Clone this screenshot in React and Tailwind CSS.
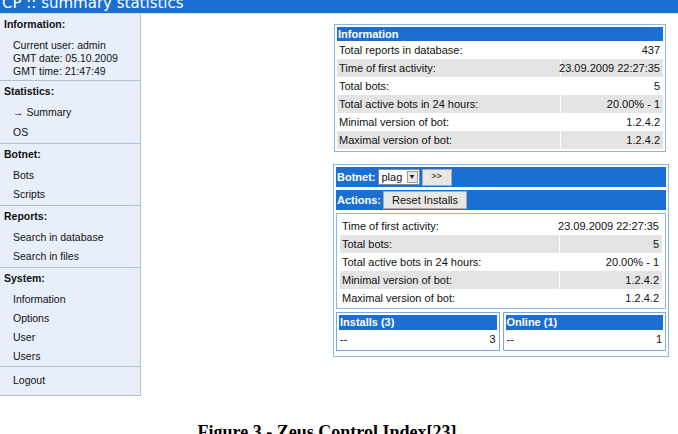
const font = { fontFamily: '"Liberation Sans", Arial, sans-serif' };

const menu = [
  { title: "Information:", plain: ["Current user: admin", "GMT date: 05.10.2009", "GMT time: 21:47:49"] },
  { title: "Statistics:", items: ["→ Summary", "OS"], h: "h-[20px]" },
  { title: "Botnet:", items: ["Bots", "Scripts"], h: "h-[19.5px]" },
  { title: "Reports:", items: ["Search in database", "Search in files"], h: "h-[19.5px]" },
  { title: "System:", items: ["Information", "Options", "User", "Users"], h: "h-[19px]" },
];

const infoRows = [
  ["Total reports in database:", "437"],
  ["Time of first activity:", "23.09.2009 22:27:35"],
  ["Total bots:", "5"],
  ["Total active bots in 24 hours:", "20.00% - 1"],
  ["Minimal version of bot:", "1.2.4.2"],
  ["Maximal version of bot:", "1.2.4.2"],
];

function Row({ label, value, gray, h }) {
  return (
    <div className={`flex ${h} ${gray ? "bg-[#e4e4e4]" : "bg-white"}`}>
      <div className="flex-1 pl-[2px] flex items-center border-r border-white whitespace-nowrap">{label}</div>
      <div className="w-[102px] pr-[3px] flex items-center justify-end whitespace-nowrap">{value}</div>
    </div>
  );
}

function MiniBox({ title, value }) {
  return (
    <div className="flex-1 border border-[#7fa9dc] p-[2px] bg-white">
      <div className="h-[15px] bg-[#1b6fd2] text-white font-bold px-[1px] flex items-center">{title}</div>
      <div className="flex h-[18px] items-center">
        <div className="flex-1 pl-[1px]">--</div>
        <div className="w-[70px] text-right pr-[1px]">{value}</div>
      </div>
    </div>
  );
}

export default function App() {
  return (
    <div className="w-[678px] h-[434px] bg-white overflow-hidden relative text-[11px] text-[#111]" style={font}>
      <div className="h-[14px] bg-[#1b6fd2] overflow-hidden border-b border-[#cfe0f5]">
        <div className="text-white text-[15px] leading-[16px] -mt-[5px] pl-[2px]" style={{ fontFamily: '"DejaVu Sans", sans-serif' }}>
          CP :: summary statistics
        </div>
      </div>

      <div className="flex">
        <div className="w-[141px] h-[382px] bg-[#e8effb] border-r border-b border-[#b7c0cc] flex flex-col text-[10.5px]">
          {menu.map((s, i) => (
            <div key={i} className="border-b border-[#b4bfcd]">
              <div className="font-bold pl-[4px] h-[22px] flex items-center">{s.title}</div>
              {s.plain && (
                <div className="pl-[13px] leading-[13px] pt-[3px] pb-[2px]">
                  {s.plain.map((p) => (
                    <div key={p}>{p}</div>
                  ))}
                </div>
              )}
              {s.items &&
                s.items.map((it) => (
                  <div key={it} className={`pl-[13px] ${s.h} flex items-center`}>
                    {it}
                  </div>
                ))}
            </div>
          ))}
          <div className="pl-[13px] h-[27px] flex items-center">Logout</div>
        </div>

        <div className="flex-1 pl-[193px] pt-[10px]">
          <div className="w-[332px] border border-[#8fb4e2] p-[2px] bg-white">
            <div className="h-[14px] bg-[#1b6fd2] text-white font-bold pl-[1px] flex items-center">Information</div>
            {infoRows.map(([l, v], i) => (
              <Row key={l} label={l} value={v} gray={i % 2 === 1} h="h-[18px]" />
            ))}
          </div>

          <div className="w-[336px] -ml-[1px] mt-[12px] border border-[#8fb4e2] p-[2px] bg-white">
            <div className="h-[20px] bg-[#1b6fd2] flex items-center pl-[1px] gap-[2px]">
              <span className="text-white font-bold">Botnet:</span>
              <div className="h-[16px] w-[42px] bg-white border border-[#7a8ca3] flex items-center pl-[3px]">
                <span className="flex-1">plag</span>
                <span className="w-[11px] h-[12px] bg-[#e6e6e6] border border-[#999] flex items-center justify-center text-[7px] mr-[1px]">▼</span>
              </div>
              <div className="h-[17px] w-[30px] bg-[#e9e7e3] border border-[#aaa] flex items-center justify-center text-[9px]">&gt;&gt;</div>
            </div>
            <div className="h-[20px] bg-[#1b6fd2] flex items-center pl-[1px] gap-[2px] mt-[3px]">
              <span className="text-white font-bold">Actions:</span>
              <div className="h-[18px] px-[8px] bg-[#e9e7e3] border border-[#aaa] flex items-center">Reset Installs</div>
            </div>
            <div className="mt-[3px] border border-[#8fb4e2] px-[3px] pt-[3px] pb-[1px]">
              {infoRows.slice(1).map(([l, v], i) => (
                <Row key={l} label={l} value={v} gray={i % 2 === 1} h="h-[18px]" />
              ))}
            </div>
            <div className="flex gap-[3px] mt-[3px] pb-[3px]">
              <MiniBox title="Installs (3)" value="3" />
              <MiniBox title="Online (1)" value="1" />
            </div>
          </div>
        </div>
      </div>

      <div
        className="absolute left-0 right-0 top-[421px] pr-[24px] text-center font-bold text-[18px] leading-[22px] text-black"
        style={{ fontFamily: '"Liberation Serif", "Times New Roman", serif' }}
      >
        Figure 3 - Zeus Control Index[23]
      </div>
    </div>
  );
}
